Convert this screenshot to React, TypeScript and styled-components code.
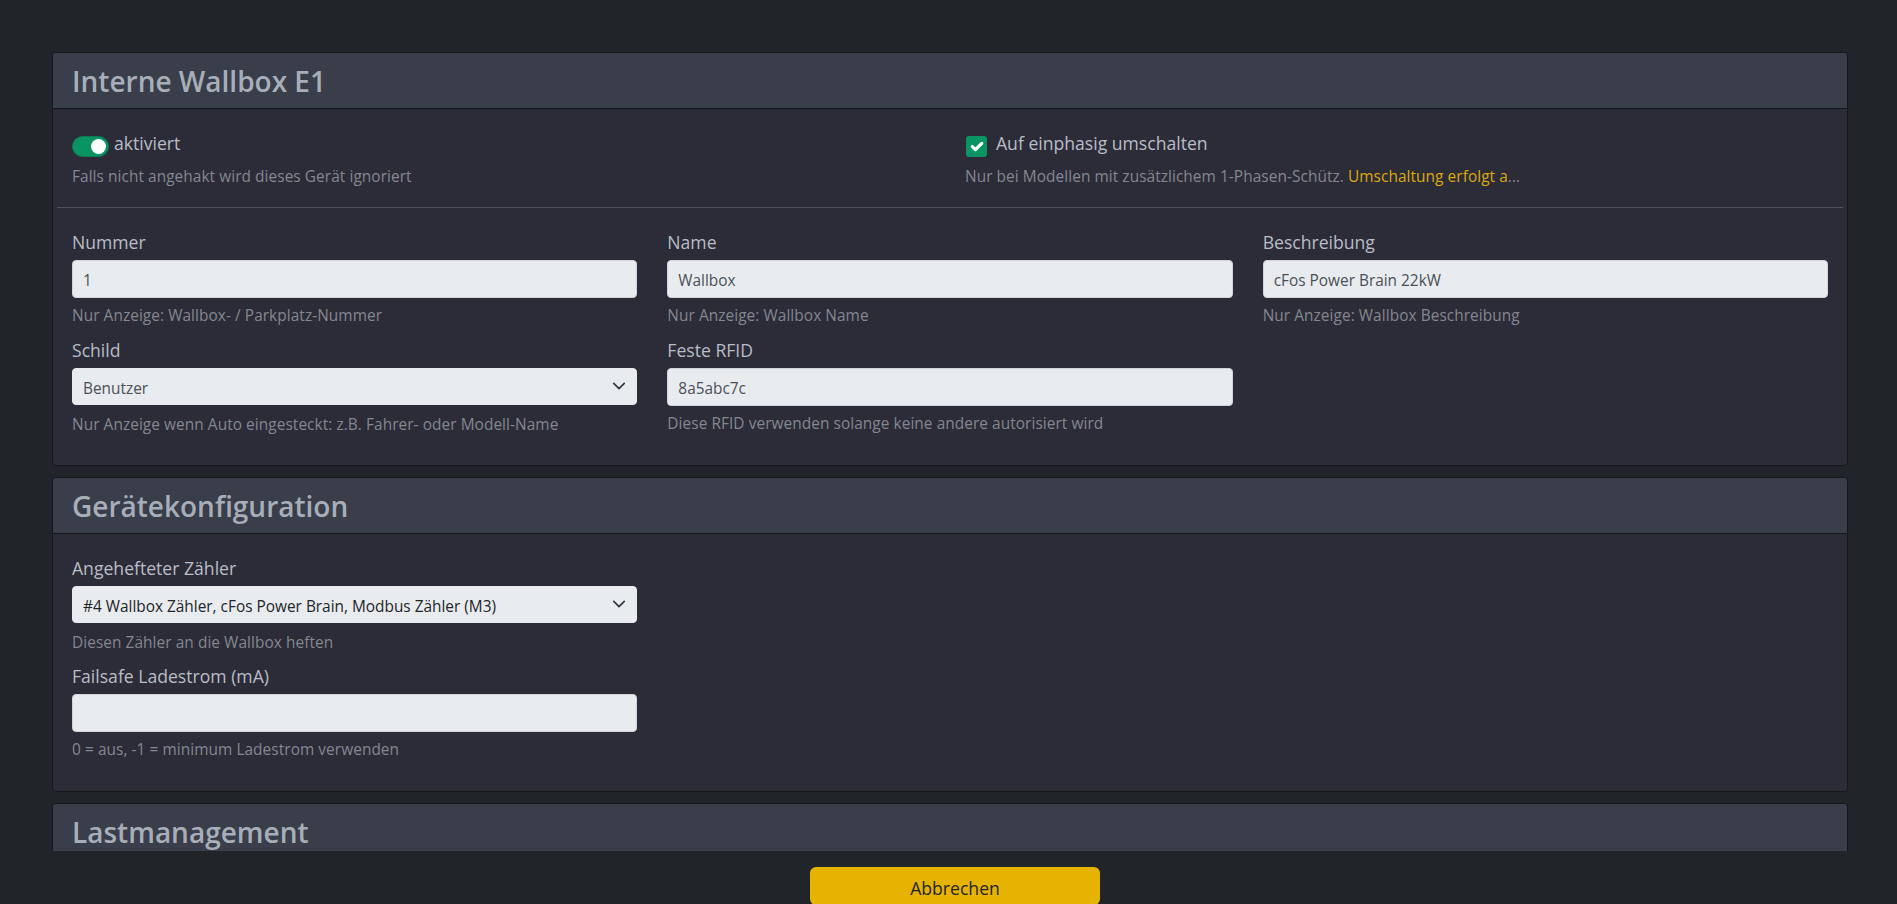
import React from "react";
import styled, { createGlobalStyle } from "styled-components";

const Global = createGlobalStyle`
  html, body { margin: 0; padding: 0; height: 100%; background: #212529; }
  body { font-family: "Open Sans", "Noto Sans", sans-serif; overflow: hidden; }
  * { box-sizing: border-box; }
`;

const Page = styled.div`
  height: 100vh;
  display: flex;
  flex-direction: column;
  overflow: hidden;
`;

const Scroll = styled.main`
  flex: 1;
  min-height: 0;
  overflow: hidden;
  padding: 52px 49px 0 52px;
  display: flex;
  flex-direction: column;
  gap: 11px;
`;

const Card = styled.section`
  flex: none;
  background: #2b2c38;
  border: 1px solid #15171b;
  border-radius: 4px;
  overflow: hidden;
`;

const CardHeader = styled.header`
  height: 56px;
  padding: 0 19px;
  background: #3a3e4a;
  border-bottom: 1px solid #15171b;
  display: flex;
  align-items: center;
`;

const Title = styled.h2`
  margin: 0;
  font-size: 28px;
  line-height: 34px;
  font-weight: 600;
  color: #a7aeb9;
`;

const CardBody = styled.div`
  padding: 24px 0 0;
`;

const ToggleRow = styled.div`
  display: grid;
  grid-template-columns: 1fr 1fr;
  column-gap: 30px;
  padding: 0 19px;
  height: 74px;
`;

const ToggleCell = styled.div`
  display: flex;
  flex-direction: column;
  gap: 7px;
`;

const ToggleLine = styled.div`
  display: flex;
  align-items: center;
  gap: 5px;
  height: 26px;
  font-size: 17.6px;
  color: #b9bdc6;
`;

const ToggleText = styled.span`
  margin-bottom: 7px;
`;

const Switch = styled.span`
  width: 37px;
  height: 21px;
  padding: 0 2px;
  border: 1px solid #0c7a54;
  border-radius: 11px;
  background: #0b9463;
  display: flex;
  justify-content: flex-end;
  align-items: center;
`;

const Knob = styled.span`
  width: 15px;
  height: 15px;
  border-radius: 50%;
  background: #fff;
`;

const Check = styled.span`
  width: 21px;
  height: 21px;
  margin-left: 1px;
  margin-right: 4px;
  border-radius: 3px;
  background: #0b9463;
  display: flex;
  align-items: center;
  justify-content: center;
`;

const Help = styled.div`
  font-size: 15.4px;
  line-height: 21px;
  letter-spacing: 0.07px;
  color: #84878f;
  white-space: nowrap;
`;

const Warn = styled.span`
  color: #dca80f;
`;

const Rule = styled.hr`
  margin: 0 4px;
  border: 0;
  border-top: 1px solid #4f515a;
`;

const Fields = styled.div`
  display: grid;
  grid-template-columns: repeat(3, 1fr);
  column-gap: 30px;
  padding: 22px 19px 19px;
`;

const Field = styled.div`
  height: 108px;
  display: flex;
  flex-direction: column;
`;

const Label = styled.label`
  font-size: 17.6px;
  line-height: 24px;
  color: #b9bdc6;
  margin-bottom: 6px;
`;

const Input = styled.input`
  height: 38px;
  width: 100%;
  border: 1px solid #ced4da;
  border-radius: 4px;
  background: #e9ecef;
  padding: 2px 10px 0;
  font: inherit;
  font-size: 15.4px;
  color: #495057;
  outline: none;
  margin-bottom: 7px;
  flex: none;
`;

const SelectWrap = styled.div`
  position: relative;
  margin-bottom: 9px;
  flex: none;
`;

const Select = styled.select<{ $dark?: boolean }>`
  display: block;
  height: 37px;
  width: 100%;
  border: 1px solid #e9ecef;
  border-radius: 4px;
  background: #e9ecef;
  padding: 3px 40px 0 10px;
  font: inherit;
  font-size: 15.4px;
  color: ${(p) => (p.$dark ? "#212529" : "#495057")};
  appearance: none;
  outline: none;
`;

const Chevron = styled.svg`
  position: absolute;
  right: 11px;
  top: 11px;
  width: 14px;
  height: 14px;
  pointer-events: none;
`;

const Footer = styled.footer`
  flex: none;
  height: 53px;
  padding-top: 16px;
  padding-left: 13px;
  display: flex;
  justify-content: center;
  align-items: flex-start;
  overflow: hidden;
  background: #212529;
`;

const CancelButton = styled.button`
  flex: none;
  width: 290px;
  height: 38px;
  border: 0;
  border-radius: 6px;
  background: #e6b400;
  color: #212529;
  font: inherit;
  font-size: 17.6px;
  padding: 4px 0 0;
`;

function FieldInput({ label, value, help }: { label: string; value: string; help: string }) {
  return (
    <Field>
      <Label>{label}</Label>
      <Input readOnly value={value} />
      <Help>{help}</Help>
    </Field>
  );
}

function FieldSelect({ label, value, help, dark }: { label: string; value: string; help: string; dark?: boolean }) {
  return (
    <Field>
      <Label>{label}</Label>
      <SelectWrap>
        <Select $dark={dark} value={value} onChange={() => undefined}>
          <option>{value}</option>
        </Select>
        <Chevron viewBox="0 0 16 16" fill="none" stroke="#343a40" strokeWidth="2" strokeLinecap="round" strokeLinejoin="round">
          <path d="m2 5 6 6 6-6" />
        </Chevron>
      </SelectWrap>
      <Help>{help}</Help>
    </Field>
  );
}

export default function App() {
  return (
    <Page>
      <Global />
      <Scroll>
        <Card>
          <CardHeader>
            <Title>Interne Wallbox E1</Title>
          </CardHeader>
          <CardBody>
            <ToggleRow>
              <ToggleCell>
                <ToggleLine>
                  <Switch>
                    <Knob />
                  </Switch>
                  <ToggleText>aktiviert</ToggleText>
                </ToggleLine>
                <Help>Falls nicht angehakt wird dieses Gerät ignoriert</Help>
              </ToggleCell>
              <ToggleCell>
                <ToggleLine>
                  <Check>
                    <svg width="21" height="21" viewBox="0 0 20 20" fill="none" stroke="#fff" strokeWidth="3" strokeLinecap="round" strokeLinejoin="round">
                      <path d="m6 10 3 3 6-6" />
                    </svg>
                  </Check>
                  <ToggleText>Auf einphasig umschalten</ToggleText>
                </ToggleLine>
                <Help>
                  Nur bei Modellen mit zusätzlichem 1-Phasen-Schütz. <Warn>Umschaltung erfolgt a</Warn>...
                </Help>
              </ToggleCell>
            </ToggleRow>
            <Rule />
            <Fields>
              <FieldInput label="Nummer" value="1" help="Nur Anzeige: Wallbox- / Parkplatz-Nummer" />
              <FieldInput label="Name" value="Wallbox" help="Nur Anzeige: Wallbox Name" />
              <FieldInput label="Beschreibung" value="cFos Power Brain 22kW" help="Nur Anzeige: Wallbox Beschreibung" />
              <FieldSelect label="Schild" value="Benutzer" help="Nur Anzeige wenn Auto eingesteckt: z.B. Fahrer- oder Modell-Name" />
              <FieldInput label="Feste RFID" value="8a5abc7c" help="Diese RFID verwenden solange keine andere autorisiert wird" />
            </Fields>
          </CardBody>
        </Card>
        <Card>
          <CardHeader>
            <Title>Gerätekonfiguration</Title>
          </CardHeader>
          <Fields>
            <FieldSelect dark label="Angehefteter Zähler" value="#4 Wallbox Zähler, cFos Power Brain, Modbus Zähler (M3)" help="Diesen Zähler an die Wallbox heften" />
            <span />
            <span />
            <FieldInput label="Failsafe Ladestrom (mA)" value="" help="0 = aus, -1 = minimum Ladestrom verwenden" />
          </Fields>
        </Card>
        <Card>
          <CardHeader>
            <Title>Lastmanagement</Title>
          </CardHeader>
        </Card>
      </Scroll>
      <Footer>
        <CancelButton>Abbrechen</CancelButton>
      </Footer>
    </Page>
  );
}
